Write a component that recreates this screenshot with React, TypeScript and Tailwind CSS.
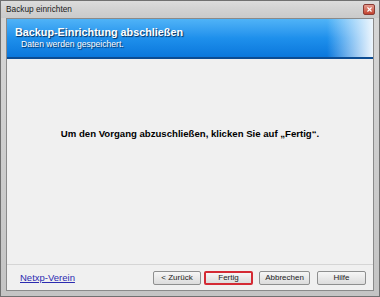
import { X } from "lucide-react";

function WizardButton({
  label,
  width,
  primary
}: {
  label: string;
  width: string;
  primary?: boolean;
}) {
  return (
    <button
      type="button"
      className={`${width} h-[14px] rounded-[2px] bg-gradient-to-b from-[#f6f6f6] to-[#dcdcdc] text-[8px] leading-none text-[#222] flex items-center justify-center ${
        primary ? "border-2 border-[#d42a34]" : "border border-[#8e8f8f]"
      }`}
    >
      {label}
    </button>
  );
}

export default function App() {
  return (
    <div
      className="w-[380px] h-[297px] flex flex-col bg-gradient-to-b from-[#d7d7d7] to-[#c4c4c4] border border-[#707070] overflow-hidden"
      style={{ fontFamily: '"Liberation Sans", Arial, sans-serif' }}
    >
      {/* title bar */}
      <div className="h-[17px] shrink-0 flex items-center justify-between pl-[5px] pr-[4px] bg-gradient-to-b from-[#dcdcdc] via-[#d2d2d2] to-[#cacaca]">
        <span className="text-[8.3px] text-[#1a1a1a] leading-none">Backup einrichten</span>
        <div className="w-[12px] h-[11px] rounded-[2px] border border-[#8a3b34] bg-gradient-to-b from-[#e49b8f] to-[#c1402e] flex items-center justify-center">
          <X size={7} strokeWidth={4} className="text-white" />
        </div>
      </div>

      {/* client area */}
      <div className="flex-1 flex flex-col ml-[5px] mr-[5px] border border-[#8a8a8a] bg-[#f0f0f0]">
        {/* header */}
        <div className="relative h-[40px] shrink-0 bg-gradient-to-b from-[#4fb3f7] via-[#1e90ec] to-[#0a77dc] border-b-2 border-[#0b4c93] pl-[8px] pt-[6px]">
          <div className="absolute inset-y-0 right-0 w-[46px] bg-gradient-to-r from-[#2b97ee]/0 to-[#eef6fd]" />
          <div className="relative text-[10.8px] font-bold leading-[14px] text-white [text-shadow:1px_1px_1px_#06305e]">
            Backup-Einrichtung abschließen
          </div>
          <div className="relative text-[8.6px] leading-[11px] pl-[6px] text-white [text-shadow:1px_1px_1px_#06305e]">
            Daten werden gespeichert.
          </div>
        </div>

        {/* content */}
        <div className="flex-1 flex justify-center pt-[69px]">
          <p className="text-[9.6px] leading-[11px] font-bold text-black">
            Um den Vorgang abzuschließen, klicken Sie auf „Fertig“.
          </p>
        </div>

        {/* footer */}
        <div className="h-[26px] shrink-0 border-t border-[#d5d5d5] flex items-start pt-[6px] pl-[13px] pr-[7px]">
          <a href="#" className="text-[9.5px] leading-[14px] text-[#2b2bb0] underline">
            Netxp-Verein
          </a>
          <div className="ml-auto flex">
            <WizardButton label="< Zurück" width="w-[48px]" />
            <div className="ml-[3px]">
              <WizardButton label="Fertig" width="w-[49px]" primary />
            </div>
            <div className="ml-[6px]">
              <WizardButton label="Abbrechen" width="w-[51px]" />
            </div>
            <div className="ml-[7px]">
              <WizardButton label="Hilfe" width="w-[49px]" />
            </div>
          </div>
        </div>
      </div>

      {/* bottom frame */}
      <div className="h-[5px] shrink-0" />
    </div>
  );
}
